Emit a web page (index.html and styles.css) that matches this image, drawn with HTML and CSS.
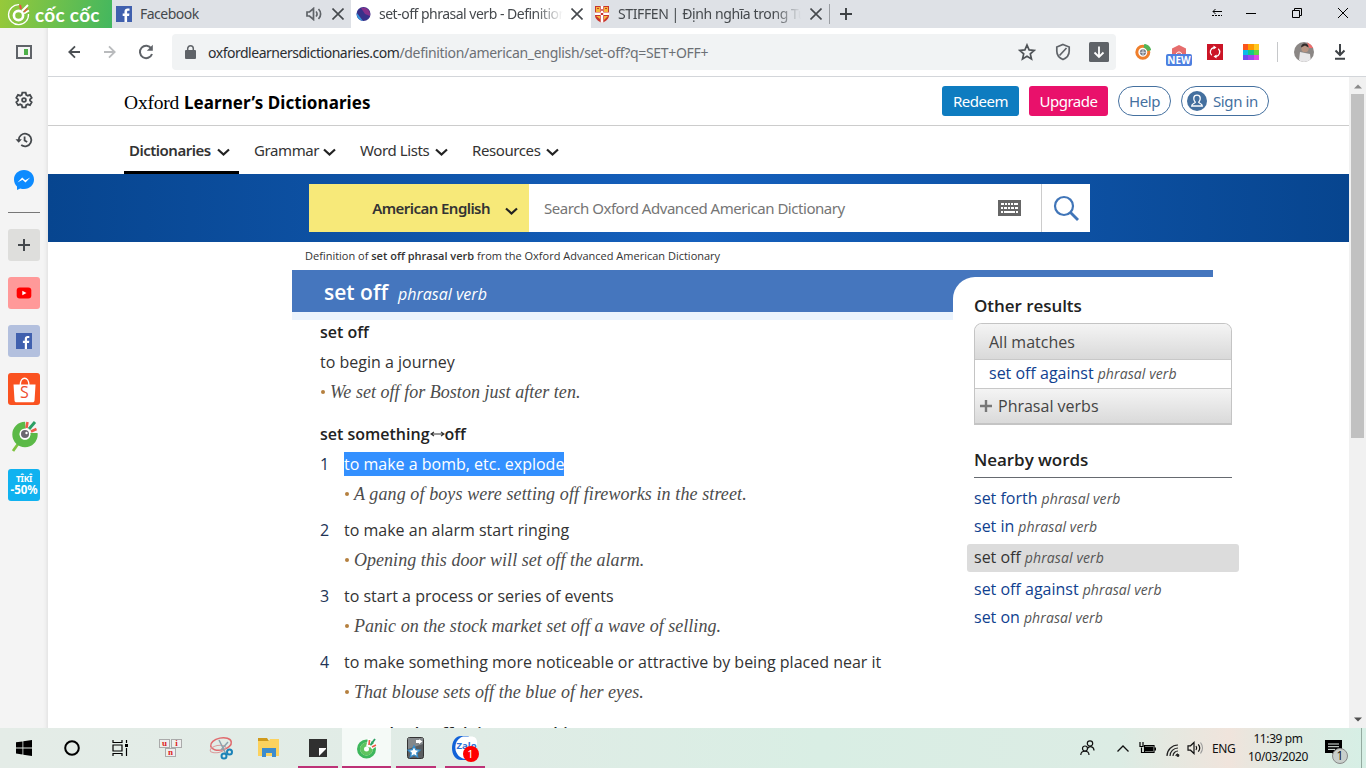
FILE: index.html
```html
<!DOCTYPE html>
<html lang="en">
<head>
<meta charset="utf-8">
<title>set-off phrasal verb - Definition</title>
<link rel="stylesheet" href="styles.css">
</head>
<body>
<div class="tabstrip">
  <div class="brand">
    <svg width="24" height="26" viewBox="0 0 24 26" fill="none" stroke="#fff"><path d="M12 3.700A10 10 0 1 0 21.500 13" stroke-width="1.300"/><circle cx="11.500" cy="14.500" r="4.600" stroke-width="2.600"/><path d="M15 10 21 4M17 12.500 22 9.500" stroke-width="2"/><path d="M13 4 14 8" stroke="#e8533f" stroke-width="2"/><path d="m17 11 3.500-3.500" stroke="#e8533f" stroke-width="1.500"/></svg>
    <span class="brand-name">cốc cốc</span>
  </div>
  <div class="tab tab-a">
    <svg width="16" height="16" viewBox="0 0 16 16"><path fill="#4060ae" d="M0 0h16v16H0z"/><path fill="#fff" d="M8.500 16V10H6.700V7.500h1.800V5.600C8.500 3.500 9.800 2.500 11.600 2.500h1.900v2.300h-1.200c-1 0-1.200.4-1.200 1.200v1.500h2.300l-.3 2.500h-2v6z"/></svg>
    <span class="tab-title t-fb">Facebook</span>
    <svg class="sound" width="17" height="14" viewBox="0 0 17 14" fill="none" stroke="#5f6368" stroke-width="1.700"><path d="M1 5h2.500L7.500 1.500v11L3.500 9H1z"/><path d="M10 4.500a3.500 3.500 0 0 1 0 5M12.500 2a7 7 0 0 1 0 10"/></svg>
    <svg class="x" width="12" height="12" viewBox="0 0 12 12" stroke="#45494d" stroke-width="1.600"><path d="M.5.5l11 11M11.500.5l-11 11"/></svg>
  </div>
  <div class="tab tab-b">
    <svg width="16" height="16" viewBox="0 0 16 16"><circle cx="7.500" cy="8" r="7" fill="#38318a"/><path fill="#84308b" d="M5 2a7 7 0 0 1 9 8L9 8z"/><path fill="#3999df" d="M.8 7 7 15A7 7 0 0 1 .8 7z"/></svg>
    <span class="tab-title fade t-set">set-off phrasal verb - Definition</span>
    <svg class="x" width="12" height="12" viewBox="0 0 12 12" stroke="#45494d" stroke-width="1.600"><path d="M.5.5l11 11M11.500.5l-11 11"/></svg>
  </div>
  <div class="tab tab-c">
    <svg width="16" height="17" viewBox="0 0 16 17"><path fill="#c9342c" d="M1 0h14v9c0 4-3 6-7 8-4-2-7-4-7-8z"/><path fill="#f4b73b" d="M2 1h4v5H2zM10 1h4v5h-4zM2 10h4v3zM10 10h4l-4 4z"/><path fill="#fff" d="M6.700 0h2.600v16.500L8 17l-1.300-.6zM1 6.500h14V9H1z"/><path fill="#c9342c" d="M7.300 3h1.400v2H7.300zM6.800 7h2.400v2H6.800zM3 2h2v1H3zM11 2h2v1h-2z"/></svg>
    <span class="tab-title fade t-stiff">STIFFEN | Định nghĩa trong Từ</span>
    <svg class="x" width="12" height="12" viewBox="0 0 12 12" stroke="#45494d" stroke-width="1.600"><path d="M.5.5l11 11M11.500.5l-11 11"/></svg>
  </div>
  <div class="newtab"><svg width="12" height="12" viewBox="0 0 12 12" stroke="#3c4043" stroke-width="1.900"><path d="M6 0v12M0 6h12"/></svg></div>
  <div class="winbtns">
    <svg width="10" height="8" viewBox="0 0 10 8" fill="none" stroke="#000"><path d="M1 2.500h9M3.500 0 1 2.500 3.500 5"/><path d="M0 6.500h10" stroke-dasharray="2 1"/></svg>
    <svg width="10" height="8" viewBox="0 0 10 8" stroke="#000"><path d="M0 4.500h10"/></svg>
    <svg width="10" height="10" viewBox="0 0 10 10" fill="none" stroke="#000"><path d="M.5 2.500h7v7h-7zM2.500 2.500v-2h7v7h-2"/></svg>
    <svg width="10" height="10" viewBox="0 0 10 10" stroke="#000"><path d="M0 0l10 10M10 0 0 10"/></svg>
  </div>
</div>
<div class="window">
  <div class="rail">
    <svg class="r24" viewBox="0 0 24 24"><path d="M5 6h14v12H5z" fill="none" stroke="#5f6368" stroke-width="2"/><path d="M12 9h4v6h-4z" fill="#4daf48"/></svg>
    <svg class="r24 gear" viewBox="0 0 24 24" fill="none" stroke="#45494d" stroke-width="1.800"><path d="M10.300 4.900h3.400l.5 2.200 1.600.9 2.200-.8 1.700 3-1.700 1.500v1.200l1.700 1.500-1.700 3-2.200-.8-1.600.9-.5 2.200h-3.400l-.5-2.200-1.600-.9-2.200.8-1.700-3L6 12.900v-1.200l-1.700-1.500 1.700-3 2.200.8 1.600-.9z" transform="translate(0 -.3)"/><circle cx="12" cy="12" r="1.900"/></svg>
    <svg class="r24 hist" viewBox="0 0 24 24" fill="none" stroke="#45494d" stroke-width="1.800"><path d="M6.700 12a6.300 6.300 0 1 1 2.500 5M12.600 8.500v4l2.600 1.600"/><path d="M3.500 11.300h6.400l-3.200 3.500z" fill="#45494d" stroke="none"/></svg>
    <svg class="r24 mess" viewBox="0 0 24 24"><path d="M12 2C6 2 2 6.300 2 11.500c0 3.200 1.500 5.500 3 7V22l3.200-1.500c1.200.4 2.500.5 3.800.5 6 0 10-4.300 10-9.500S18 2 12 2z" fill="#0d8bff"/><path d="m5.500 14.500 4.700-5 3 2.700 5-2.700-4.700 5-3-2.700z" fill="#fff"/></svg>
    <div class="rule"></div>
    <div class="box plus"><svg width="12" height="12" viewBox="0 0 12 12" stroke="#45494d" stroke-width="2"><path d="M6 0v12M0 6h12"/></svg></div>
    <div class="box yt"><svg width="16" height="12" viewBox="0 0 16 12"><rect x=".7" y=".5" width="14.600" height="11" rx="3" fill="#f00"/><path fill="#fff" d="m6.300 3.700 4.200 2.300-4.200 2.300z"/></svg></div>
    <div class="box fb"><svg width="16" height="16" viewBox="0 0 16 16"><path fill="#4060ae" d="M0 0h16v16H0z"/><path fill="#fff" d="M8.800 16V10H6.900V7.700h1.900V5.900C8.800 3.800 10 3 11.600 3h1.700v2h-1.100c-1 0-1.200.4-1.200 1.200v1.500h2.300L13 10h-2v6z"/></svg></div>
    <div class="box shop"><svg width="32" height="32" viewBox="0 0 32 32"><path fill="#fff" d="M5.500 11.500h22l-1 16c-.1 1.200-.8 1.800-2 1.800h-16c-1.200 0-1.900-.6-2-1.800z"/><path d="M12.300 12c0-9 8.600-9 8.600 0" fill="none" stroke="#fff" stroke-width="1.400"/></svg><span class="shop-s">S</span></div>
    <svg class="coc" width="32" height="32" viewBox="0 0 32 32"><path d="m5 30 5-7" stroke="#7fc241" stroke-width="2.800"/><circle cx="17" cy="13.500" r="9" fill="none" stroke="#5bb947" stroke-width="7.400"/><path fill="#f4f4f4" d="m18 12-1-13h13l2 13z"/><circle cx="17" cy="13" r="5.500" fill="#fff"/><circle cx="17" cy="13" r="4" fill="#6b6670"/><circle cx="18.500" cy="12" r="1.200" fill="#fff"/><path d="M18.500 7 19.500 1M23 10.500 28.500 8" stroke="#ed5a48" stroke-width="2.500"/><path d="m21 8 6-7" stroke="#2b9f63" stroke-width="3"/></svg>
    <div class="box tiki"><span class="tk1">TÎKÎ</span><span class="tk2">-50%</span></div>
  </div>
  <div class="main">
    <div class="toolbar">
      <div class="navbtns">
        <svg width="12" height="14" viewBox="0 0 12 14" fill="none" stroke="#4b4f53" stroke-width="1.800"><path d="M12 7H1.500M7 1.300 1.300 7 7 12.700"/></svg>
        <svg width="12" height="14" viewBox="0 0 12 14" fill="none" stroke="#b9bbbd" stroke-width="1.800"><path d="M0 7h10.500M5 1.300 10.700 7 5 12.700"/></svg>
        <svg width="16" height="16" viewBox="0 0 16 16" fill="none" stroke="#5f6368" stroke-width="2"><path d="M13.300 4.500A6.200 6.200 0 1 0 14 10"/><path d="M14.800.8v6H8.800z" fill="#5f6368" stroke="none"/></svg>
      </div>
      <div class="omni">
        <svg class="lock" width="11" height="14" viewBox="0 0 11 14"><path fill="#5f6368" d="M1 5h9a1 1 0 0 1 1 1v7a1 1 0 0 1-1 1H1a1 1 0 0 1-1-1V6a1 1 0 0 1 1-1z"/><path d="M2.700 5.500V3.600a2.800 2.800 0 0 1 5.600 0v1.900" fill="none" stroke="#5f6368" stroke-width="1.500"/></svg>
        <span class="url">oxfordlearnersdictionaries.com<span class="path">/definition/american_english/set-off?q=SET+OFF+</span></span>
        <div class="cells">
          <div><svg width="18" height="18" viewBox="0 0 18 18" fill="none" stroke="#4f5357" stroke-width="1.700"><path d="m9 2 2.100 4.900 5.100.5-3.900 3.500 1.200 5.100L9 13.300 4.500 16l1.200-5.100-3.900-3.500 5.100-.5z"/></svg></div>
          <div><svg width="16" height="18" viewBox="0 0 16 18" fill="none" stroke="#5f6368" stroke-width="1.700"><path d="M8 1.500 14.200 4v4c0 4-2.200 6.800-6.200 8.500C4 14.800 1.800 12 1.800 8V4zM4.500 12.500l7-7.500"/></svg></div>
          <div><svg width="20" height="20" viewBox="0 0 20 20"><rect width="20" height="20" rx="1.500" fill="#5f6368"/><path d="M10 4.500v10M5.500 10.500 10 15l4.500-4.500" fill="none" stroke="#fff" stroke-width="1.800"/></svg></div>
        </div>
      </div>
      <div class="cells ext">
        <div><svg width="16" height="16" viewBox="0 0 16 16"><circle cx="7.800" cy="8.200" r="6" fill="#fff" stroke="#ef7f2c" stroke-width="3"/><path d="M9 1.800a6.500 6.500 0 0 1 5.300 4.800" fill="none" stroke="#52b558" stroke-width="4"/><circle cx="8" cy="8.300" r="3.100" fill="#777b86"/><path d="M8 5.500v5.500M5.300 8.300h5.400" stroke="#d9dde2"/></svg></div>
        <div><span class="new-ico"><svg width="14" height="9" viewBox="0 0 14 9"><path fill="#e66d6d" d="M7 0 14 3.500V9H0V3.500z"/><path d="M4.300 9a2.800 2.800 0 0 1 5.400 0" fill="none" stroke="#fff"/></svg><b>NEW</b></span></div>
        <div><svg width="16" height="16" viewBox="0 0 16 16"><path fill="#cb1526" d="M0 0h16v16H0z"/><path d="M7 3.500a4.500 4.500 0 0 0-2.300 7.700M9 12.500a4.500 4.500 0 0 0 2.300-7.700" fill="none" stroke="#fff" stroke-width="1.300"/><path d="M6.500 1.500v4L9.500 3.500zM9.500 10.500v4l-3-2z" fill="#fff"/></svg></div>
        <div><svg width="16" height="16" viewBox="0 0 16 16"><path fill="#fa541c" d="M0 0h6v6H0z"/><path fill="#ff9800" d="M5 0h6v6H5z"/><path fill="#ffc720" d="M11 0h5v6h-5z"/><path fill="#0abce8" d="M0 6h5v5H0z"/><path fill="#12cb85" d="M5 6h6v5H5z"/><path fill="#62d642" d="M11 6h5v5h-5z"/><path fill="#6d4cf0" d="M0 11h5v5H0z"/><path fill="#9b48ed" d="M5 11h6v5H5z"/><path fill="#e04ae2" d="M11 11h5v5h-5z"/></svg></div>
      </div>
      <div class="vsep"></div>
      <svg class="avatar" width="20" height="20" viewBox="0 0 20 20"><clipPath id="av"><circle cx="10" cy="10" r="10"/></clipPath><g clip-path="url(#av)"><path fill="#8b8785" d="M0 0h20v20H0z"/><path fill="#f16c6b" d="M13 0h7v6h-5z"/><path fill="#e8e7e9" d="m5 18 1-8 5 1 5 1 1 8-9 1z"/><circle cx="11" cy="6.500" r="3.700" fill="#b79583"/><path fill="#332c2b" d="M7 5.500c0-5.500 8-5 7.500 0l-3.500-2z"/></g></svg>
      <svg width="12" height="16" viewBox="0 0 12 16" fill="none" stroke="#3f4347" stroke-width="2"><path d="M6 0v10.500M1.500 6.500 6 11l4.500-4.500M1 14.800h10"/></svg>
    </div>
    <div class="viewport">
      <div class="page">
        <div class="site-head">
          <div class="logo"><span class="ox">Oxford</span><b>Learner’s Dictionaries</b></div>
          <div class="actions">
            <span class="btn redeem">Redeem</span>
            <span class="btn upgrade">Upgrade</span>
            <span class="pill help">Help</span>
            <span class="pill sign"><svg width="20" height="20" viewBox="0 0 20 20"><circle cx="10" cy="10" r="10" fill="#44709f"/><path d="M8.300 11.300C6 9 6 4.200 10 4.200s4 4.800 1.700 7.100c0 1 3.600 1.200 3.600 3.700H4.700c0-2.500 3.600-2.700 3.600-3.700z" fill="none" stroke="#fff" stroke-width="1.300"/></svg>Sign in</span>
          </div>
        </div>
        <div class="menu">
          <span class="mi on"><b class="m1">Dictionaries</b><svg class="chev" viewBox="0 0 13 8"><path d="m1 1.500 5.500 5 5.500-5"/></svg></span>
          <span class="mi g"><span class="m2">Grammar</span><svg class="chev" viewBox="0 0 13 8"><path d="m1 1.500 5.500 5 5.500-5"/></svg></span>
          <span class="mi w"><span class="m3">Word Lists</span><svg class="chev" viewBox="0 0 13 8"><path d="m1 1.500 5.500 5 5.500-5"/></svg></span>
          <span class="mi r"><span class="m4">Resources</span><svg class="chev" viewBox="0 0 13 8"><path d="m1 1.500 5.500 5 5.500-5"/></svg></span>
        </div>
        <div class="banner">
          <div class="search">
            <div class="lang"><span class="ae">American English</span><svg class="chev" viewBox="0 0 13 8"><path d="m1 1.500 5.500 5 5.500-5"/></svg></div>
            <div class="field"><span class="ph">Search Oxford Advanced American Dictionary</span>
              <svg width="23" height="16" viewBox="0 0 23 16"><path fill="#666" d="M0 0h23v16H0z"/><path d="M3 4h3M7 4h2M10 4h2M13 4h2M16 4h4M3 8h2M6 8h3M10 8h2M13 8h3M17 8h3M3 12h2M6 12h11M18 12h2" stroke="#fff" stroke-width="2.200"/></svg>
            </div>
            <div class="go"><svg width="27" height="27" viewBox="0 0 27 27" fill="none" stroke="#4075b8" stroke-width="2.200"><circle cx="11" cy="11" r="9"/><path d="m17.500 17.500 7.500 7.500" stroke-width="2.800"/></svg></div>
          </div>
        </div>
        <div class="crumb">Definition of <b>set off phrasal verb</b> from the Oxford Advanced American Dictionary</div>
        <div class="entry">
          <div class="left">
            <div class="bar"><span class="hw">set off</span><i class="pos">phrasal verb</i></div>
            <div class="article">
              <div class="ln h"><span class="h1">set off</span></div>
              <div class="ln"><span class="d0">to begin a journey</span></div>
              <div class="ln ex"><i class="e0">We set off for Boston just after ten.</i></div>
              <div class="ln h sp"><span class="h2">set something</span><svg width="15" height="8" viewBox="0 0 15 8" stroke="#333" stroke-width="1.100" fill="none"><path d="M1 4h13M4 2 1 4l3 2M11 2l3 2-3 2"/></svg><span>off</span></div>
              <div class="ln"><span class="n">1</span><span class="d1 sel">to make a bomb, etc. explode</span></div>
              <div class="ln ex in"><i class="e1">A gang of boys were setting off fireworks in the street.</i></div>
              <div class="ln s6"><span class="n">2</span><span class="d2">to make an alarm start ringing</span></div>
              <div class="ln ex in"><i class="e2">Opening this door will set off the alarm.</i></div>
              <div class="ln s6"><span class="n">3</span><span class="d3">to start a process or series of events</span></div>
              <div class="ln ex in"><i class="e3">Panic on the stock market set off a wave of selling.</i></div>
              <div class="ln s6"><span class="n">4</span><span class="d4">to make something more noticeable or attractive by being placed near it</span></div>
              <div class="ln ex in"><i class="e4">That blouse sets off the blue of her eyes.</i></div>
              <div class="ln h next"><span>set somebody off doing something</span></div>
            </div>
          </div>
          <div class="right">
            <div class="panel">
              <div class="ph3 o">Other results</div>
              <div class="acc">
                <div class="row grey a1"><span>All matches</span></div>
                <div class="row a2"><a>set off against</a><i>phrasal verb</i></div>
                <div class="row grey a3"><svg width="12" height="12" viewBox="0 0 12 12" stroke="#777" stroke-width="2.400"><path d="M6 0v12M0 6h12"/></svg><span>Phrasal verbs</span></div>
              </div>
              <div class="ph3 nb">Nearby words</div>
              <div class="near">
                <div><a>set forth</a><i>phrasal verb</i></div>
                <div><a>set in</a><i>phrasal verb</i></div>
                <div class="cur"><a>set off</a><i>phrasal verb</i></div>
                <div><a>set off against</a><i>phrasal verb</i></div>
                <div><a>set on</a><i>phrasal verb</i></div>
              </div>
            </div>
          </div>
        </div>
      </div>
      <div class="scroll">
        <svg width="8" height="5" viewBox="0 0 8 5"><path fill="#8a8a8a" d="M0 4.500 4 .5l4 4z"/></svg>
        <div class="thumb"></div>
        <svg width="8" height="5" viewBox="0 0 8 5"><path fill="#505050" d="M0 .5 4 4.500l4-4z"/></svg>
      </div>
    </div>
  </div>
</div>
<div class="taskbar">
  <div class="tk"><svg width="16" height="16" viewBox="0 0 16 16"><path d="M0 2.300 6.500 1.400v6.100H0zM7.300 1.300 16 0v7.500H7.300zM0 8.400h6.500v6.100L0 13.600zM7.300 8.400H16V16l-8.700-1.300z"/></svg></div>
  <div class="tk"><svg width="18" height="18" viewBox="0 0 18 18"><circle cx="9" cy="9" r="6.800" fill="none" stroke="#000" stroke-width="2"/></svg></div>
  <div class="tk"><svg width="17" height="16" viewBox="0 0 17 16" fill="none" stroke="#000" stroke-width="1.200"><path d="M1 0v2.500h9V0M1 5h9v6H1zM1 16v-2.500h9V16M14.500 0v3M14.500 8v8"/><path d="M13 4h3v3h-3z" fill="#000" stroke="none"/></svg></div>
  <div class="tk"><div class="uni"><span>u</span><span>i</span><span>n</span></div></div>
  <div class="tk"><svg width="24" height="24" viewBox="0 0 24 24" fill="none"><ellipse cx="12" cy="8" rx="10.500" ry="6" stroke="#e06a6d" stroke-width="1.500" transform="rotate(-12 12 8)"/><ellipse cx="9" cy="13" rx="8" ry="3.500" stroke="#d99a9b" transform="rotate(-12 9 13)"/><path d="m10 4 7 14M19 6l-7 8" stroke="#8da2ad" stroke-width="1.500"/><circle cx="15" cy="20" r="2.500" stroke="#1b83b8" stroke-width="2"/><circle cx="20.500" cy="16" r="2.500" stroke="#1b83b8" stroke-width="2"/></svg></div>
  <div class="tk"><svg width="22" height="20" viewBox="0 0 22 20"><path fill="#d09a1c" d="M0 0h9l2 3H0z"/><path fill="#fcd25e" d="M0 3h11l1-2h9v17H0z"/><path fill="#3d8ccd" d="M4 10h14v9h-4v-4H8v4H4z"/></svg></div>
  <div class="tk run"><svg width="18" height="18" viewBox="0 0 18 18"><path fill="#303030" d="M0 0h18v18H0z"/><path fill="#fff" d="M17 9v1l-7 7V9z"/></svg></div>
  <div class="tk run act"><svg width="20" height="22" viewBox="0 0 20 22"><circle cx="9.500" cy="12" r="8" fill="none" stroke="#3eb75c" stroke-width="3"/><circle cx="9.500" cy="12" r="4.500" fill="#fff" stroke="#5fc45f" stroke-width="4"/><path d="m11 10 2-8M14 11l5-4" stroke="#fff" stroke-width="4"/><path d="m12 8 .5-5M15 10l4-2" stroke="#ed5a48" stroke-width="1.700"/><path d="m13.500 8 4.500-6" stroke="#2b9f63" stroke-width="1.800"/></svg></div>
  <div class="tk run"><svg width="17" height="22" viewBox="0 0 17 22"><rect x=".5" y=".5" width="16" height="21" rx="2" fill="#5b5e61" stroke="#333"/><path fill="#84888b" d="M1 1h15v6L1 12z"/><path fill="#fff" stroke="#348bca" stroke-width="1.400" d="m7 9 1.800 3.700 4 .5-3 2.800.8 4-3.600-2-3.600 2 .8-4-3-2.800 4-.5z"/><path fill="#fff" d="M9 3h3v-.8l3.500 2.300L12 7V6H9z"/></svg></div>
  <div class="tk run"><div class="zalo"><svg width="26" height="24" viewBox="0 0 26 24"><path fill="#1262d8" d="M9 0h8L10 12l6 12H9c-12 0-12-24 0-24z"/><path fill="#fff" d="M11 .5h8c4 0 6 2 6 6v10c0 4-2 6.500-6 6.500h-6C1 21 0 4 11 .5z"/></svg><span class="zn">Zalo</span><span class="badge">1</span></div></div>
  <div class="tray">
    <svg class="people" width="15" height="16" viewBox="0 0 15 16" fill="none" stroke="#111" stroke-width="1.200"><circle cx="10" cy="3.500" r="2.700"/><path d="M7.500 8.500c2-3 6.500-2 6.500 2"/><circle cx="5" cy="8.500" r="2.500"/><path d="M.8 15c0-5 8.200-5 8.200 0"/></svg>
    <svg class="up" width="12" height="7" viewBox="0 0 12 7" fill="none" stroke="#111" stroke-width="1.300"><path d="m.5 6.500 5.500-5.500 5.500 5.500"/></svg>
    <svg class="bat" width="17" height="12" viewBox="0 0 17 12"><path fill="none" stroke="#000" stroke-width="1.200" d="M5.500 3.500h9.500v7H5.500zM2.500 5.500v5H5M1 1v3.500h3V1M1 0v2M4 0v2"/><path d="M6 4.500h8v5H6zM15.500 5.500H17v3h-1.500z"/></svg>
    <svg class="wifi" width="14" height="13" viewBox="0 0 14 13" fill="none" stroke="#222" stroke-width="1.200"><path d="M1 12A11 11 0 0 1 12 1M4 12a8 8 0 0 1 8-8M7 12a5 5 0 0 1 5-5M9.800 12A3 3 0 0 1 12 9.800"/><circle cx="12" cy="11.500" r=".8" fill="#000"/></svg>
    <svg class="vol" width="17" height="14" viewBox="0 0 17 14" fill="none" stroke="#111" stroke-width="1.200"><path d="M1 4.800h2.500L7 1.500v11L3.500 9.200H1zM9 5a3.500 3.500 0 0 1 0 4M11.300 3.300a6 6 0 0 1 0 7.400"/><path d="M13.500 1.500a9 9 0 0 1 0 11" stroke="#999"/></svg>
    <span class="eng">ENG</span>
    <div class="clock"><span>11:39 pm</span><span class="date">10/03/2020</span></div>
    <div class="notif"><svg width="17" height="17" viewBox="0 0 17 17"><path d="M0 0h17v13h-6v4L7 13H0z"/><path d="M3 4h11M3 6.700h11M3 9.400h7" stroke="#e4ede7"/></svg><span>1</span></div>
  </div>
  <div class="peek"></div>
</div>
</body>
</html>
```
FILE: styles.css
```css
* { box-sizing: border-box; }
body { margin: 0; width: 1366px; height: 768px; overflow: hidden; display: flex; flex-direction: column; background: #fff; font-family: "Open Sans", "Noto Sans", sans-serif; color: #333; white-space: nowrap; }
svg { display: block; flex: none; }

/* tab strip */
.tabstrip { height: 28px; flex: none; display: flex; background: #dee1e6; font-family: "Noto Sans", sans-serif; font-size: 14px; color: #45494d; }
.brand { width: 112px; display: flex; align-items: center; padding: 0 0 0 7px; background: linear-gradient(100deg, #97c93a, #43b75f); }
.brand-name { font: 700 19px/26px Lato, sans-serif; color: #fff; margin-left: 4px; padding-top: 2px; letter-spacing: .3px; }
.tab { display: flex; align-items: center; }
.tab-a { width: 239px; padding-left: 4px; }
.tab-b { width: 240px; padding-left: 5px; background: #fff; }
.tab-c { width: 238px; padding-left: 3px; }
.tab-title { line-height: 28px; overflow: hidden; margin-left: 8px; }
.t-fb { width: 166px; letter-spacing: -.5px; }
.t-set { width: 184px; margin-left: 7px; letter-spacing: -.5px; }
.t-stiff { width: 183px; letter-spacing: -.4px; }
.fade { -webkit-mask-image: linear-gradient(90deg, #000 85%, transparent); mask-image: linear-gradient(90deg, #000 85%, transparent); }
.sound { margin-right: 9px; }
.tab-b .x { margin-left: 8px; }
.tab-c .x { margin-left: 9px; }
.newtab { width: 30px; height: 20px; margin-top: 4px; border-left: 1px solid #9b9ea3; padding: 4px 0 0 10px; }
.winbtns { margin-left: auto; display: flex; align-items: center; height: 26px; }
.winbtns svg { margin-right: 36px; }
.winbtns svg:first-child { margin-right: 24px; }
.winbtns svg:last-child { margin-right: 18px; }

/* browser side rail */
.window { flex: 1; display: flex; min-height: 0; }
.rail { width: 48px; flex: none; background: #f4f4f4; box-shadow: inset -5px 0 4px -4px #ddd; display: flex; flex-direction: column; align-items: center; padding-top: 12px; }
.r24 { width: 24px; height: 24px; }
.gear { margin-top: 24px; }
.hist, .mess { margin-top: 16px; }
.rule { width: 32px; height: 1px; background: #777; margin: 20px 0 16px; }
.box { width: 32px; height: 32px; border-radius: 3px; display: flex; align-items: center; justify-content: center; flex: none; margin-bottom: 16px; position: relative; }
.plus { background: #dededc; }
.yt { background: #f99; }
.fb { background: #b3c0de; }
.shop { background: #fa5220; }
.shop-s { position: absolute; left: 0; right: -1px; top: 11px; text-align: center; font: 16px/17px "Open Sans", sans-serif; color: #ee4d2d; }
.coc { margin-bottom: 16px; }
.tiki { background: #10b2f0; flex-direction: column; color: #fff; }
.tk1 { font: 700 8.500px/10px "Noto Sans", sans-serif; letter-spacing: -.3px; }
.tk2 { font: 700 11.500px/12px "Noto Sans", sans-serif; letter-spacing: -.1px; }

/* toolbar */
.main { width: 1318px; display: flex; flex-direction: column; }
.toolbar { height: 49px; flex: none; border-bottom: 1px solid #d3d6da; display: flex; align-items: center; padding-left: 20px; }
.navbtns { display: flex; align-items: center; width: 104px; padding-bottom: 1px; }
.navbtns svg { margin-right: 24px; }
.navbtns svg:nth-child(2) { margin-right: 22px; }
.navbtns svg:last-child { margin-right: 0; }
.omni { width: 944px; height: 36px; background: #f1f3f4; border-radius: 4px; display: flex; align-items: center; padding-left: 13px; }
.url { margin-left: 12px; font-size: 14px; font-family: "Noto Sans", sans-serif; color: #2b2e31; letter-spacing: -.48px; }
.path { color: #6c7075; letter-spacing: -.32px; }
.cells { display: flex; margin-left: auto; height: 36px; }
.cells > div { width: 36px; display: flex; align-items: center; justify-content: center; }
.omni .cells { margin-right: -1px; }
.ext { margin-left: 9px; }
.new-ico { display: flex; flex-direction: column; align-items: center; padding-top: 7px; }
.new-ico b { width: 26px; height: 12px; border-radius: 2px; background: #4d7fe0; color: #fff; font: 700 10px/12px "Open Sans", sans-serif; text-align: center; }
.vsep { width: 1px; height: 20px; background: #c6c8ca; margin: 0 16px 0 8px; }
.avatar { margin-right: 20px; }

/* page */
.viewport { flex: 1; display: flex; min-height: 0; }
.page { width: 1301px; overflow: hidden; }
.site-head { height: 49px; border-bottom: 1px solid #ccc; display: flex; align-items: center; padding: 0 80px 0 76px; justify-content: space-between; }
.logo { display: flex; align-items: baseline; color: #000; line-height: 24px; padding-top: 4px; }
.ox { font-family: "Liberation Serif", serif; font-size: 19.500px; width: 60px; letter-spacing: -.2px; }
.logo b { font-family: "Noto Sans", sans-serif; font-size: 17px; letter-spacing: .07px; }
.actions { display: flex; font-family: "Noto Sans", sans-serif; font-size: 15px; color: #fff; }
.btn { height: 30px; line-height: 30px; border-radius: 3px; text-align: center; letter-spacing: -.5px; }
.redeem { width: 77px; background: #0e7cc0; }
.upgrade { width: 79px; margin: 0 10px; background: #e9116b; }
.pill { height: 30px; line-height: 28px; border: 1px solid #44709f; border-radius: 15px; color: #44709f; text-align: center; letter-spacing: -.4px; }
.help { width: 53px; margin-right: 10px; }
.sign { width: 88px; display: flex; align-items: center; padding-left: 5px; gap: 6px; }
.menu { height: 48px; display: flex; padding-left: 76px; font-family: "Noto Sans", sans-serif; font-size: 15px; line-height: 50px; }
.mi { display: flex; align-items: center; justify-content: space-between; height: 48px; }
.on { width: 115px; padding: 0 9px 0 5px; border-bottom: 3px solid #000; line-height: 50px; }
.on b { font-weight: 600; margin-top: 3px; }
.on .chev { margin-top: 6px; }
.chev { width: 13px; height: 8px; fill: none; stroke: #222; stroke-width: 2.200px; margin-top: 3px; }
.g { width: 82px; margin-left: 15px; }
.w { width: 88px; margin-left: 24px; }
.r { width: 87px; margin-left: 24px; }
.menu span { letter-spacing: -.4px; }
.menu b { letter-spacing: -.5px; }
.banner { height: 68px; background: linear-gradient(90deg, #07458f, #1560bd 50%, #07458f); padding: 10px 0 0 261px; }
.search { width: 781px; height: 48px; background: #fff; display: flex; }
.lang { width: 220px; background: #f7e979; display: flex; align-items: center; justify-content: flex-end; padding-right: 11px; font: 600 15px/48px "Noto Sans", sans-serif; color: #333; }
.ae { letter-spacing: -.55px; }
.lang .chev { margin: 5px 0 0 15px; }
.field { width: 513px; display: flex; align-items: center; justify-content: space-between; padding: 0 20px 0 15px; border-right: 1px solid #ccc; font: 15px/48px "Noto Sans", sans-serif; letter-spacing: -.46px; color: #757575; }
.go { width: 48px; padding: 11px 0 0 11px; }
.crumb { height: 28px; line-height: 28px; padding-left: 257px; font-size: 11px; color: #333; }
.crumb b { font-weight: 600; }
.entry { display: flex; margin-left: 244px; align-items: flex-start; }
.left { width: 661px; }
.bar { height: 50px; background: #4576be; border-bottom: 8px solid #eaf3fd; padding-left: 32px; color: #fff; display: flex; align-items: baseline; line-height: 44px; }
.hw { font-size: 21px; font-weight: 600; width: 74px; }
.pos { font-size: 16px; }
.article { padding: 0 0 0 28px; margin-top: -3px; font-size: 16px; }
.ln { height: 30px; line-height: 30px; display: flex; align-items: center; }
.h { font-weight: 600; color: #222; }
.sp { margin-top: 12px; }
.next { margin-top: 11px; }
.s6 { margin-top: 6px; }
.n { width: 24px; color: #223355; }
.sel { background: #3390ff; color: #fff; line-height: 24px; height: 24px; }
.ex::before { content: ""; width: 4px; height: 4px; border-radius: 50%; background: #b5803f; margin: 0 5px 0 1px; }
.ex { font-family: "Liberation Serif", serif; font-size: 18px; color: #4c4c4c; letter-spacing: .03px; }
.e1 { letter-spacing: .1px; }
.in { padding-left: 24px; }
.right { width: 286px; padding-top: 7px; background: linear-gradient(#4576be, #4576be) 0 0 / 260px 42px no-repeat; }
.panel { background: #fff; border-radius: 22px 0 0 0; padding: 14px 7px 0 21px; font-size: 16px; min-height: 400px; }
.ph3 { font-size: 17px; font-weight: 600; line-height: 30px; color: #222; height: 32px; letter-spacing: -.05px; }
.acc { border: 1px solid #c4c4c4; border-bottom-width: 2px; border-radius: 8px 8px 0 0; height: 102px; overflow: hidden; }
.row { display: flex; align-items: center; padding-left: 14px; }
.row.grey { background: linear-gradient(#f4f4f4, #d9d9d9); color: #444; }
.a1 { height: 36px; border-bottom: 1px solid #c8c8c8; }
.a2 { height: 29px; border-bottom: 1px solid #c8c8c8; padding-bottom: 2px; }
.a3 { height: 35px; padding: 0 0 2px 5px; gap: 6px; }
a { color: #10418f; }
.row i, .near i { font-size: 14px; margin-left: 4px; color: #555; letter-spacing: .1px; }
.nb { margin-top: 20px; height: 33px; border-bottom: 1px solid #666a70; margin-bottom: 6px; }
.near div { height: 28px; line-height: 28px; display: flex; align-items: baseline; }
.near .cur { background: #dcdcdc; border-radius: 3px; margin: 4px -7px 3px; padding-left: 7px; line-height: 26px; }
.cur a { color: #333; }
.scroll { width: 17px; background: #f1f1f1; display: flex; flex-direction: column; align-items: center; padding: 7px 0 6px; }
.thumb { width: 13px; height: 344px; margin: 5px 0 auto; background: #c1c1c1; }

/* taskbar */
.taskbar { height: 40px; flex: none; display: flex; background: linear-gradient(90deg, #e4ece7 0, #e0ece6 35%, #d9eee4 60%, #dcece4 82%, #f0e4dc 90%, #dfeae2 94%, #d6efe5 100%); color: #111; }
.tk { width: 49px; display: flex; align-items: center; justify-content: center; border-bottom: 2px solid transparent; padding-top: 1px; }
.tk:nth-child(-n+3) { width: 48px; }
.tk:nth-child(4) { width: 53px; }
.tk:nth-child(5) { width: 47px; }
.tk.run { border: 0; background: linear-gradient(#bd3277, #bd3277) 5px 38px / 40px 2px no-repeat; padding-bottom: 1px; }
.tk.act { background: linear-gradient(#bd3277, #bd3277) 0 38px / 100% 2px no-repeat, #f5faf7; }
.uni { width: 24px; display: flex; flex-wrap: wrap; justify-content: center; }
.uni span { width: 11px; height: 9px; background: #eee; border: 1px solid #aaa; font: 700 9px/6px "Liberation Serif", serif; color: #d22; text-align: center; margin: 0 .5px; }
.zalo { position: relative; }
.zn { position: absolute; left: 5px; top: 4px; font: 700 9.500px/12px "Open Sans", sans-serif; color: #2d70d6; }
.badge { position: absolute; left: 11px; top: 10px; width: 16px; height: 16px; border-radius: 50%; background: #f00; color: #fff; font: 11px/16px "Noto Sans", sans-serif; text-align: center; }
.tray { margin-left: auto; display: flex; align-items: center; font-family: "Noto Sans", sans-serif; font-size: 12px; }
.up { margin-left: 22px; }
.bat { margin-left: 10px; }
.wifi { margin: 5px 0 0 10px; }
.vol { margin-left: 7px; }
.eng { margin-left: 8px; width: 37px; letter-spacing: -.4px; }
.clock { width: 58px; display: flex; flex-direction: column; align-items: center; line-height: 18px; letter-spacing: -.4px; }
.notif { position: relative; margin-left: 18px; width: 17px; }
.notif span { position: absolute; left: 7px; top: 8px; width: 16px; height: 16px; border-radius: 50%; background: #c9cfcb; border: 1px solid #888; font: 12px/14px "Open Sans", sans-serif; text-align: center; }
.peek { width: 5px; height: 40px; border-left: 1px solid #93aaa0; margin-left: 19px; }
```
